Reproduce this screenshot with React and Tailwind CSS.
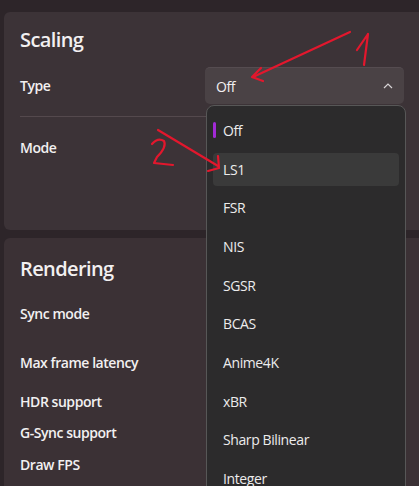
import React from "react";

const items = ["Off", "LS1", "FSR", "NIS", "SGSR", "BCAS", "Anime4K", "xBR", "Sharp Bilinear", "Integer"];

export default function App() {
  return (
    <div
      className="relative w-[419px] h-[486px] overflow-hidden bg-[#2d2529] text-[#f2f0f1]"
      style={{ fontFamily: '"Segoe UI", "Open Sans", "Noto Sans", sans-serif' }}
    >
      <div className="flex flex-col gap-[8px] pt-[12px] pl-[4px]">
        {/* Scaling card */}
        <div className="h-[218px] w-[415px] rounded-l-[6px] bg-[#3c3337] pl-[16px] pr-[15px] pt-[14px]">
          <div className="h-[28px] text-[20px] leading-[28px] font-semibold tracking-[-0.6px]">Scaling</div>
          <div className="mt-[13px] flex h-[37px] items-center">
            <div className="flex-1 text-[14px] font-semibold tracking-[-0.45px]">Type</div>
            <div className="flex h-[37px] w-[199px] items-center justify-between rounded-[5px] border-t border-[#554c50] bg-[#4a4245] pl-[11px] pr-[11px]">
              <span className="text-[14px] tracking-[-0.4px]">Off</span>
              <svg width="10" height="6" viewBox="0 0 10 6" fill="none">
                <path d="M1 5 L5 1 L9 5" stroke="#d8d4d6" strokeWidth="1.2" />
              </svg>
            </div>
          </div>
          <div className="mt-[12px] border-t border-[#54494d]" />
          <div className="mt-[21px] h-[20px] text-[14px] leading-[20px] font-semibold tracking-[-0.45px]">Mode</div>
        </div>
        {/* Rendering card */}
        <div className="h-[260px] w-[415px] rounded-l-[6px] bg-[#3b3135] pl-[16px] pt-[17px] tracking-[-0.45px]">
          <div className="h-[28px] text-[20px] leading-[28px] font-semibold tracking-[-0.6px]">Rendering</div>
          <div className="mt-[21px] h-[20px] text-[14px] leading-[20px] font-semibold">Sync mode</div>
          <div className="mt-[29px] h-[20px] text-[14px] leading-[20px] font-semibold">Max frame latency</div>
          <div className="mt-[19px] h-[20px] text-[14px] leading-[20px] font-semibold">HDR support</div>
          <div className="mt-[11px] h-[20px] text-[14px] leading-[20px] font-semibold">G-Sync support</div>
          <div className="mt-[12px] h-[20px] text-[14px] leading-[20px] font-semibold">Draw FPS</div>
        </div>
      </div>

      {/* Dropdown menu */}
      <div className="absolute left-[206px] top-[105px] h-[400px] w-[200px] rounded-t-[8px] border border-[#575757] bg-[#2c2b2c] pt-[5px]">
        {items.map((it, i) => (
          <div key={it} className="flex h-[38.7px] items-center">
            <div
              className={
                "relative mx-[6px] flex h-[33px] flex-1 items-center rounded-[4px] pl-[10px] text-[14px] tracking-[-0.4px] text-[#ececec] " +
                (i === 1 ? "bg-[#3a3a3a]" : "")
              }
            >
              {i === 0 && (
                <span className="absolute left-0 top-[8px] h-[16px] w-[3px] rounded-full bg-[#a22ad6]" />
              )}
              {it}
            </div>
          </div>
        ))}
      </div>

      {/* Red annotations */}
      <svg className="pointer-events-none absolute left-0 top-0" width="419" height="486" viewBox="0 0 419 486" fill="none">
        <g stroke="#e3172d" strokeWidth="2.2" strokeLinecap="round" strokeLinejoin="round">
          <path d="M350 32 L253 77" />
          <path d="M261 68 L252 77 L263 81" />
          <path d="M357 50 L368 34 L364 65" />
          <path d="M158 130 L218 166" />
          <path d="M218 156 L219 168 L208 171" />
          <path d="M152 144 Q158 137 164 141 Q167 147 157 157 L154 163 L173 165" />
        </g>
      </svg>
    </div>
  );
}
